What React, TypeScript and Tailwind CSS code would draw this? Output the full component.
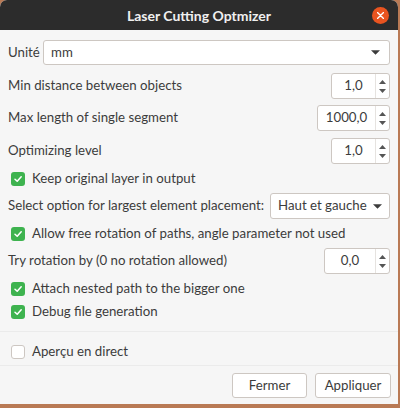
import React from "react";

const font = { fontFamily: 'Lato, "Noto Sans", sans-serif' };

function Check({ checked, label }: { checked: boolean; label: string }) {
  return (
    <div className="flex items-center h-[23px] pl-[11px] whitespace-nowrap">
      {checked ? (
        <div className="w-[14px] h-[14px] rounded-[3px] bg-[#3eb34f] flex items-center justify-center">
          <svg width="10" height="10" viewBox="0 0 10 10">
            <path d="M2 5.2 L4.2 7.3 L8.2 2.8" stroke="white" strokeWidth="1.5" fill="none" strokeLinecap="round" strokeLinejoin="round" />
          </svg>
        </div>
      ) : (
        <div className="w-[14px] h-[14px] rounded-[3px] bg-white border border-[#cdc7c2]" />
      )}
      <span className="ml-[7px]">{label}</span>
    </div>
  );
}

function Spin({ value, w }: { value: string; w: string }) {
  return (
    <div className={`flex h-[26px] bg-white border border-[#cdc7c2] rounded-[3px] ${w}`}>
      <div className="flex-1 flex items-center justify-center">{value}</div>
      <div className="w-[14px] border-l border-[#e6e3e0] flex flex-col items-center justify-center gap-[5px]">
        <svg width="7" height="4" viewBox="0 0 7 4"><path d="M0 4 L3.5 0 L7 4Z" fill="#555" /></svg>
        <svg width="7" height="4" viewBox="0 0 7 4"><path d="M0 0 L3.5 4 L7 0Z" fill="#555" /></svg>
      </div>
    </div>
  );
}

function Caret() {
  return (
    <svg width="9" height="5" viewBox="0 0 10 5" className="shrink-0"><path d="M0 0 L5 5 L10 0Z" fill="#3c3c3c" /></svg>
  );
}

export default function App() {
  return (
    <div className="w-[400px] h-[408px] bg-[#b97a55] overflow-hidden" style={font}>
      <div className="w-[398px] h-[404px] bg-[#f6f6f6] rounded-t-[7px] overflow-hidden flex flex-col text-[13.25px] text-[#3c3c3c] whitespace-nowrap">
        <div className="h-[30px] bg-[#2c2c2c] flex items-center justify-center relative shrink-0">
          <span className="font-bold text-[14px] text-[#f0f0f0]">Laser Cutting Optmizer</span>
          <div className="absolute right-[9px] top-[7px] w-[17px] h-[17px] rounded-full bg-[#e95420] flex items-center justify-center">
            <svg width="7" height="7" viewBox="0 0 7 7"><path d="M0.5 0.5 L6.5 6.5 M6.5 0.5 L0.5 6.5" stroke="white" strokeWidth="1.4" strokeLinecap="round" /></svg>
          </div>
        </div>
        <div className="flex flex-col px-[8px] pt-[10px]">
          <div className="flex items-center h-[25px]">
            <span className="w-[35px]">Unité</span>
            <div className="flex-1 h-[25px] bg-white border border-[#cdc7c2] rounded-[3px] flex items-center justify-between pl-[7px] pr-[9px]">
              <span>mm</span>
              <Caret />
            </div>
          </div>
          <div className="flex items-center justify-between h-[26px] mt-[8px]">
            <span>Min distance between objects</span>
            <Spin value="1,0" w="w-[59px]" />
          </div>
          <div className="flex items-center justify-between h-[26px] mt-[6px]">
            <span>Max length of single segment</span>
            <Spin value="1000,0" w="w-[73px]" />
          </div>
          <div className="flex items-center justify-between h-[26px] mt-[7px]">
            <span>Optimizing level</span>
            <Spin value="1,0" w="w-[59px]" />
          </div>
          <div className="-ml-[8px] mt-[3px]">
            <Check checked label="Keep original layer in output" />
          </div>
          <div className="flex items-center justify-between h-[26px] mt-[3px]">
            <span>Select option for largest element placement:</span>
            <div className="w-[120px] h-[26px] bg-white border border-[#cdc7c2] rounded-[3px] flex items-center justify-between pl-[7px] pr-[7px]">
              <span>Haut et gauche</span>
              <Caret />
            </div>
          </div>
          <div className="-ml-[8px] mt-[3px]">
            <Check checked label="Allow free rotation of paths, angle parameter not used" />
          </div>
          <div className="flex items-center justify-between h-[26px] mt-[3px]">
            <span>Try rotation by (0 no rotation allowed)</span>
            <Spin value="0,0" w="w-[66px]" />
          </div>
          <div className="-ml-[8px] mt-[3px]">
            <Check checked label="Attach nested path to the bigger one" />
          </div>
          <div className="-ml-[8px]">
            <Check checked label="Debug file generation" />
          </div>
        </div>
        <div className="h-px bg-[#ebebeb] mt-[8px]" />
        <div className="pt-[8px] pb-[2px]">
          <Check checked={false} label="Aperçu en direct" />
        </div>
        <div className="h-px bg-[#ebebeb]" />
        <div className="flex justify-end gap-[8px] pr-[7px] pt-[7px]">
          <button className="w-[75px] h-[25px] bg-white border border-[#cdc7c2] rounded-[3px]">Fermer</button>
          <button className="w-[76px] h-[25px] bg-white border border-[#cdc7c2] rounded-[3px]">Appliquer</button>
        </div>
      </div>
    </div>
  );
}
